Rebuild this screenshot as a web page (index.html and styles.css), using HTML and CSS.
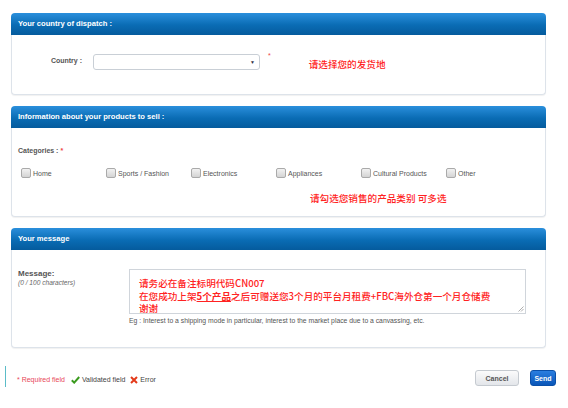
FILE: index.html
```html
<!DOCTYPE html>
<html>
<head>
<meta charset="utf-8">
<link rel="stylesheet" href="styles.css">
</head>
<body>
<div class="page">
  <div class="panel">
    <div class="panel-head">Your country of dispatch :</div>
    <div class="panel-body body-country">
      <div class="country-row">
        <span class="lbl-country">Country :</span>
        <div class="select"><span class="arrow">▼</span></div>
        <span class="req">*</span>
        <span class="note">请选择您的发货地</span>
      </div>
    </div>
  </div>

  <div class="panel">
    <div class="panel-head">Information about your products to sell :</div>
    <div class="panel-body body-products">
      <div class="lbl-cat">Categories : <span class="req-inline">*</span></div>
      <div class="cats">
        <label class="cat"><span class="cb"></span>Home</label>
        <label class="cat"><span class="cb"></span>Sports / Fashion</label>
        <label class="cat"><span class="cb"></span>Electronics</label>
        <label class="cat"><span class="cb"></span>Appliances</label>
        <label class="cat"><span class="cb"></span>Cultural Products</label>
        <label class="cat"><span class="cb"></span>Other</label>
      </div>
      <div class="note note-cat">请勾选您销售的产品类别 可多选</div>
    </div>
  </div>

  <div class="panel panel-last">
    <div class="panel-head">Your message</div>
    <div class="panel-body body-msg">
      <div class="msg-label">
        <div class="lbl-msg">Message:</div>
        <div class="lbl-count">(0 / 100 characters)</div>
      </div>
      <div class="msg-field">
        <div class="textarea">
          <div>请务必在备注标明代码CN007</div>
          <div>在您成功上架<b class="u">5个产品</b>之后可赠送您3个月的平台月租费+FBC海外仓第一个月仓储费</div>
          <div>谢谢</div>
          <svg class="grip" width="7" height="7" viewBox="0 0 7 7"><path d="M6.5 1.5L1.5 6.5M6.5 4L4 6.5" stroke="#999" stroke-width="0.8"/></svg>
        </div>
        <div class="eg">Eg : Interest to a shipping mode in particular, interest to the market place due to a canvassing, etc.</div>
      </div>
    </div>
  </div>
</div>

<div class="footer">
  <div class="legend">
    <span class="leg-req">* Required field</span>
    <svg class="ic" width="9" height="8" viewBox="0 0 9 8"><path d="M0.8 4.2L3.2 6.6L8.2 1" fill="none" stroke="#3a9a1e" stroke-width="2"/></svg>
    <span class="leg-txt">Validated field</span>
    <svg class="ic ic-x" width="8" height="8" viewBox="0 0 8 8"><path d="M1 1L7 7M7 1L1 7" stroke="#e33a1a" stroke-width="2"/></svg>
    <span class="leg-txt">Error</span>
  </div>
  <div class="buttons">
    <span class="btn btn-cancel">Cancel</span>
    <span class="btn btn-send">Send</span>
  </div>
</div>
</body>
</html>
```
FILE: styles.css
```css
html, body {
  margin: 0;
  padding: 0;
  background: #ffffff;
}
body {
  font-family: "Liberation Sans", Arial, sans-serif;
  color: #555;
  width: 568px;
  height: 408px;
  overflow: hidden;
}
.page {
  padding: 13px 0 0 11px;
  width: 535px;
}
.panel {
  margin-bottom: 11px;
}
.panel-last {
  margin-bottom: 0;
}
.panel-head {
  height: 22px;
  line-height: 22px;
  padding-left: 7px;
  border-radius: 4px 4px 0 0;
  background: linear-gradient(#2a8fdc, #0a6cb4 55%, #055b9d);
  color: #fff;
  font-weight: bold;
  font-size: 7.6px;
}
.panel-body {
  border: 1px solid #dde3ea;
  border-top: none;
  border-radius: 0 0 4px 4px;
  background: #fff;
  box-shadow: 0 1px 1px rgba(0,0,0,0.06);
  box-sizing: border-box;
}
.body-country {
  height: 60px;
  padding-top: 19px;
}
.country-row {
  display: flex;
  align-items: center;
}
.lbl-country {
  width: 70px;
  text-align: right;
  font-weight: bold;
  font-size: 7px;
  color: #555;
  position: relative;
  top: -2px;
}
.select {
  margin-left: 11px;
  width: 167px;
  height: 16px;
  box-sizing: border-box;
  border: 1px solid #c9cfd6;
  border-radius: 3px;
  background: #fff;
  display: flex;
  justify-content: flex-end;
  align-items: center;
  padding-right: 4px;
}
.arrow {
  font-size: 5px;
  color: #334;
}
.req {
  color: #e44;
  font-size: 7px;
  margin-left: 8px;
  align-self: flex-start;
  margin-top: -2px;
}
.note {
  color: #f22;
  font-family: "Noto Sans CJK SC", sans-serif;
  font-weight: 500;
  font-size: 9.6px;
}
.country-row .note {
  margin-left: 38px;
  position: relative;
  top: 2px;
}
.body-products {
  height: 89px;
  padding: 18px 0 0 6px;
}
.lbl-cat {
  font-weight: bold;
  font-size: 7px;
  line-height: 10px;
  color: #555;
}
.req-inline {
  color: #e44;
}
.cats {
  display: flex;
  margin-top: 12px;
  margin-left: 3px;
}
.cat {
  width: 85px;
  display: flex;
  align-items: center;
  font-size: 7px;
  color: #555;
}
.cb {
  width: 8px;
  height: 8px;
  border: 1px solid #aaa;
  border-radius: 2px;
  background: linear-gradient(#f2f2f2, #d4d4d4);
  margin-right: 2px;
}
.note-cat {
  margin-left: 292px;
  margin-top: 13px;
  line-height: 14px;
}
.body-msg {
  height: 98px;
  padding: 19px 0 0 6px;
  display: flex;
}
.msg-label {
  width: 111px;
}
.lbl-msg {
  font-size: 8px;
  font-weight: bold;
  color: #555;
  line-height: 10px;
}
.lbl-count {
  font-size: 6.6px;
  font-style: italic;
  color: #666;
  line-height: 8px;
}
.msg-field {
  width: 397px;
}
.textarea {
  position: relative;
  height: 45px;
  box-sizing: border-box;
  border: 1px solid #d0d5db;
  padding: 7px 9px 0;
  color: #f22;
  font-family: "Noto Sans CJK SC", sans-serif;
  font-weight: 500;
  font-size: 9.6px;
  line-height: 12.5px;
}
.u {
  text-decoration: underline;
  font-weight: bold;
}
.grip {
  position: absolute;
  right: 1px;
  bottom: 1px;
}
.eg {
  margin-top: 3px;
  font-size: 6.8px;
  color: #555;
}
.footer {
  margin: 18px 0 0 5px;
  width: 551px;
  height: 21px;
  display: flex;
  justify-content: space-between;
  align-items: center;
}
.legend {
  height: 21px;
  border-left: 1px solid #5bbcc8;
  display: flex;
  align-items: center;
  padding-left: 11px;
  padding-top: 6px;
  box-sizing: border-box;
  font-size: 7px;
}
.leg-req {
  color: #e8475a;
}
.ic {
  margin-left: 6px;
  margin-right: 2px;
}
.ic-x {
  margin-left: 5px;
}
.leg-txt {
  color: #444;
}
.buttons {
  display: flex;
  align-items: center;
  padding-top: 2px;
}
.btn {
  height: 16px;
  line-height: 15px;
  box-sizing: border-box;
  border-radius: 3px;
  font-size: 7px;
  text-align: center;
}
.btn-cancel {
  width: 44px;
  border: 1px solid #c5cad0;
  background: linear-gradient(#fbfbfb, #e3e6ea);
  color: #555;
  font-weight: bold;
}
.btn-send {
  width: 26px;
  margin-left: 11px;
  border: 1px solid #0a4fa8;
  background: linear-gradient(#2a7ee0, #0a56b8);
  color: #fff;
  font-weight: bold;
}
```
